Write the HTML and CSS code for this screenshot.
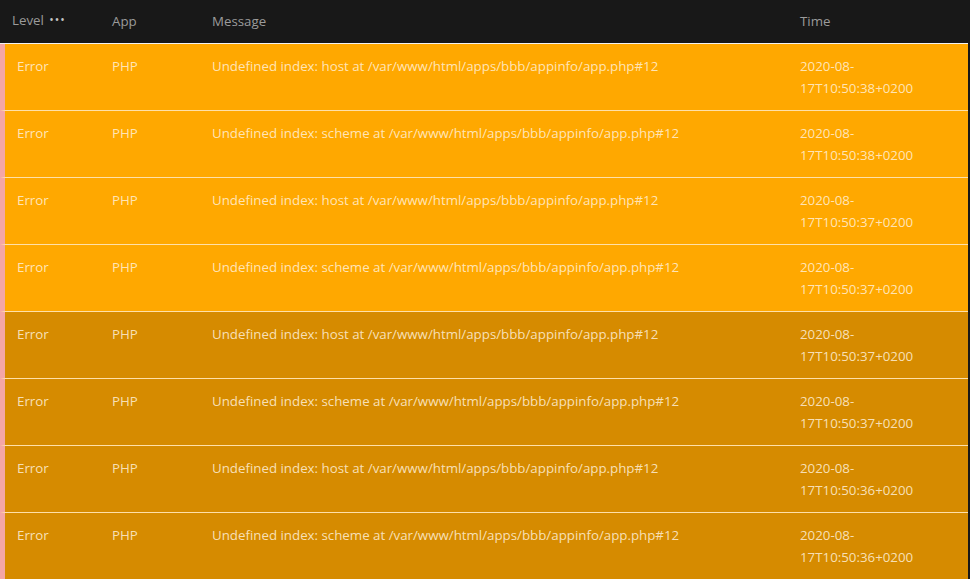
FILE: index.html
```html
<!DOCTYPE html>
<html lang="en">
<head>
<meta charset="utf-8">
<title>Log</title>
<link rel="stylesheet" href="styles.css">
</head>
<body>
<div class="log">
  <div class="head">
    <div class="hcell">Level <span class="dots">&bull;&bull;&bull;</span></div>
    <div class="hcell">App</div>
    <div class="hcell">Message</div>
    <div class="hcell">Time</div>
  </div>
  <div class="row bright"><div>Error</div><div>PHP</div><div>Undefined index: host at /var/www/html/apps/bbb/appinfo/app.php#12</div><div>2020-08-<br>17T10:50:38+0200</div></div>
  <div class="row bright"><div>Error</div><div>PHP</div><div>Undefined index: scheme at /var/www/html/apps/bbb/appinfo/app.php#12</div><div>2020-08-<br>17T10:50:38+0200</div></div>
  <div class="row bright"><div>Error</div><div>PHP</div><div>Undefined index: host at /var/www/html/apps/bbb/appinfo/app.php#12</div><div>2020-08-<br>17T10:50:37+0200</div></div>
  <div class="row bright"><div>Error</div><div>PHP</div><div>Undefined index: scheme at /var/www/html/apps/bbb/appinfo/app.php#12</div><div>2020-08-<br>17T10:50:37+0200</div></div>
  <div class="row dim"><div>Error</div><div>PHP</div><div>Undefined index: host at /var/www/html/apps/bbb/appinfo/app.php#12</div><div>2020-08-<br>17T10:50:37+0200</div></div>
  <div class="row dim"><div>Error</div><div>PHP</div><div>Undefined index: scheme at /var/www/html/apps/bbb/appinfo/app.php#12</div><div>2020-08-<br>17T10:50:37+0200</div></div>
  <div class="row dim"><div>Error</div><div>PHP</div><div>Undefined index: host at /var/www/html/apps/bbb/appinfo/app.php#12</div><div>2020-08-<br>17T10:50:36+0200</div></div>
  <div class="row dim"><div>Error</div><div>PHP</div><div>Undefined index: scheme at /var/www/html/apps/bbb/appinfo/app.php#12</div><div>2020-08-<br>17T10:50:36+0200</div></div>
</div>
</body>
</html>
```
FILE: styles.css
```css
html, body {
  margin: 0;
  padding: 0;
  background: #181818;
  height: 100%;
  overflow: hidden;
}
body {
  font-family: "Open Sans", "Noto Sans", sans-serif;
  font-size: 13.3px;
}
.log {
  width: 968px;
}
.head {
  display: grid;
  grid-template-columns: 100px 100px 588px 1fr;
  padding-left: 12px;
  padding-bottom: 2px;
  height: 41px;
  align-items: center;
  color: #9b9b9b;
  border-bottom: 1px solid #f2f2f2;
  background: #181818;
}
.hcell {
  line-height: 22px;
}
.dots {
  font-size: 12px;
  letter-spacing: 1px;
  margin-left: 2px;
  color: #c4c4c4;
  position: relative;
  top: -1px;
}
.row {
  display: grid;
  grid-template-columns: 95px 100px 588px 1fr;
  border-left: 5px solid #f4a6a6;
  padding: 11px 0 11px 12px;
  height: 44px;
  line-height: 22px;
  border-bottom: 1px solid #ffe0a8;
  color: rgba(255, 242, 222, 0.84);
}
.bright {
  background: #ffa800;
}
.dim {
  background: #d68b00;
}
```
